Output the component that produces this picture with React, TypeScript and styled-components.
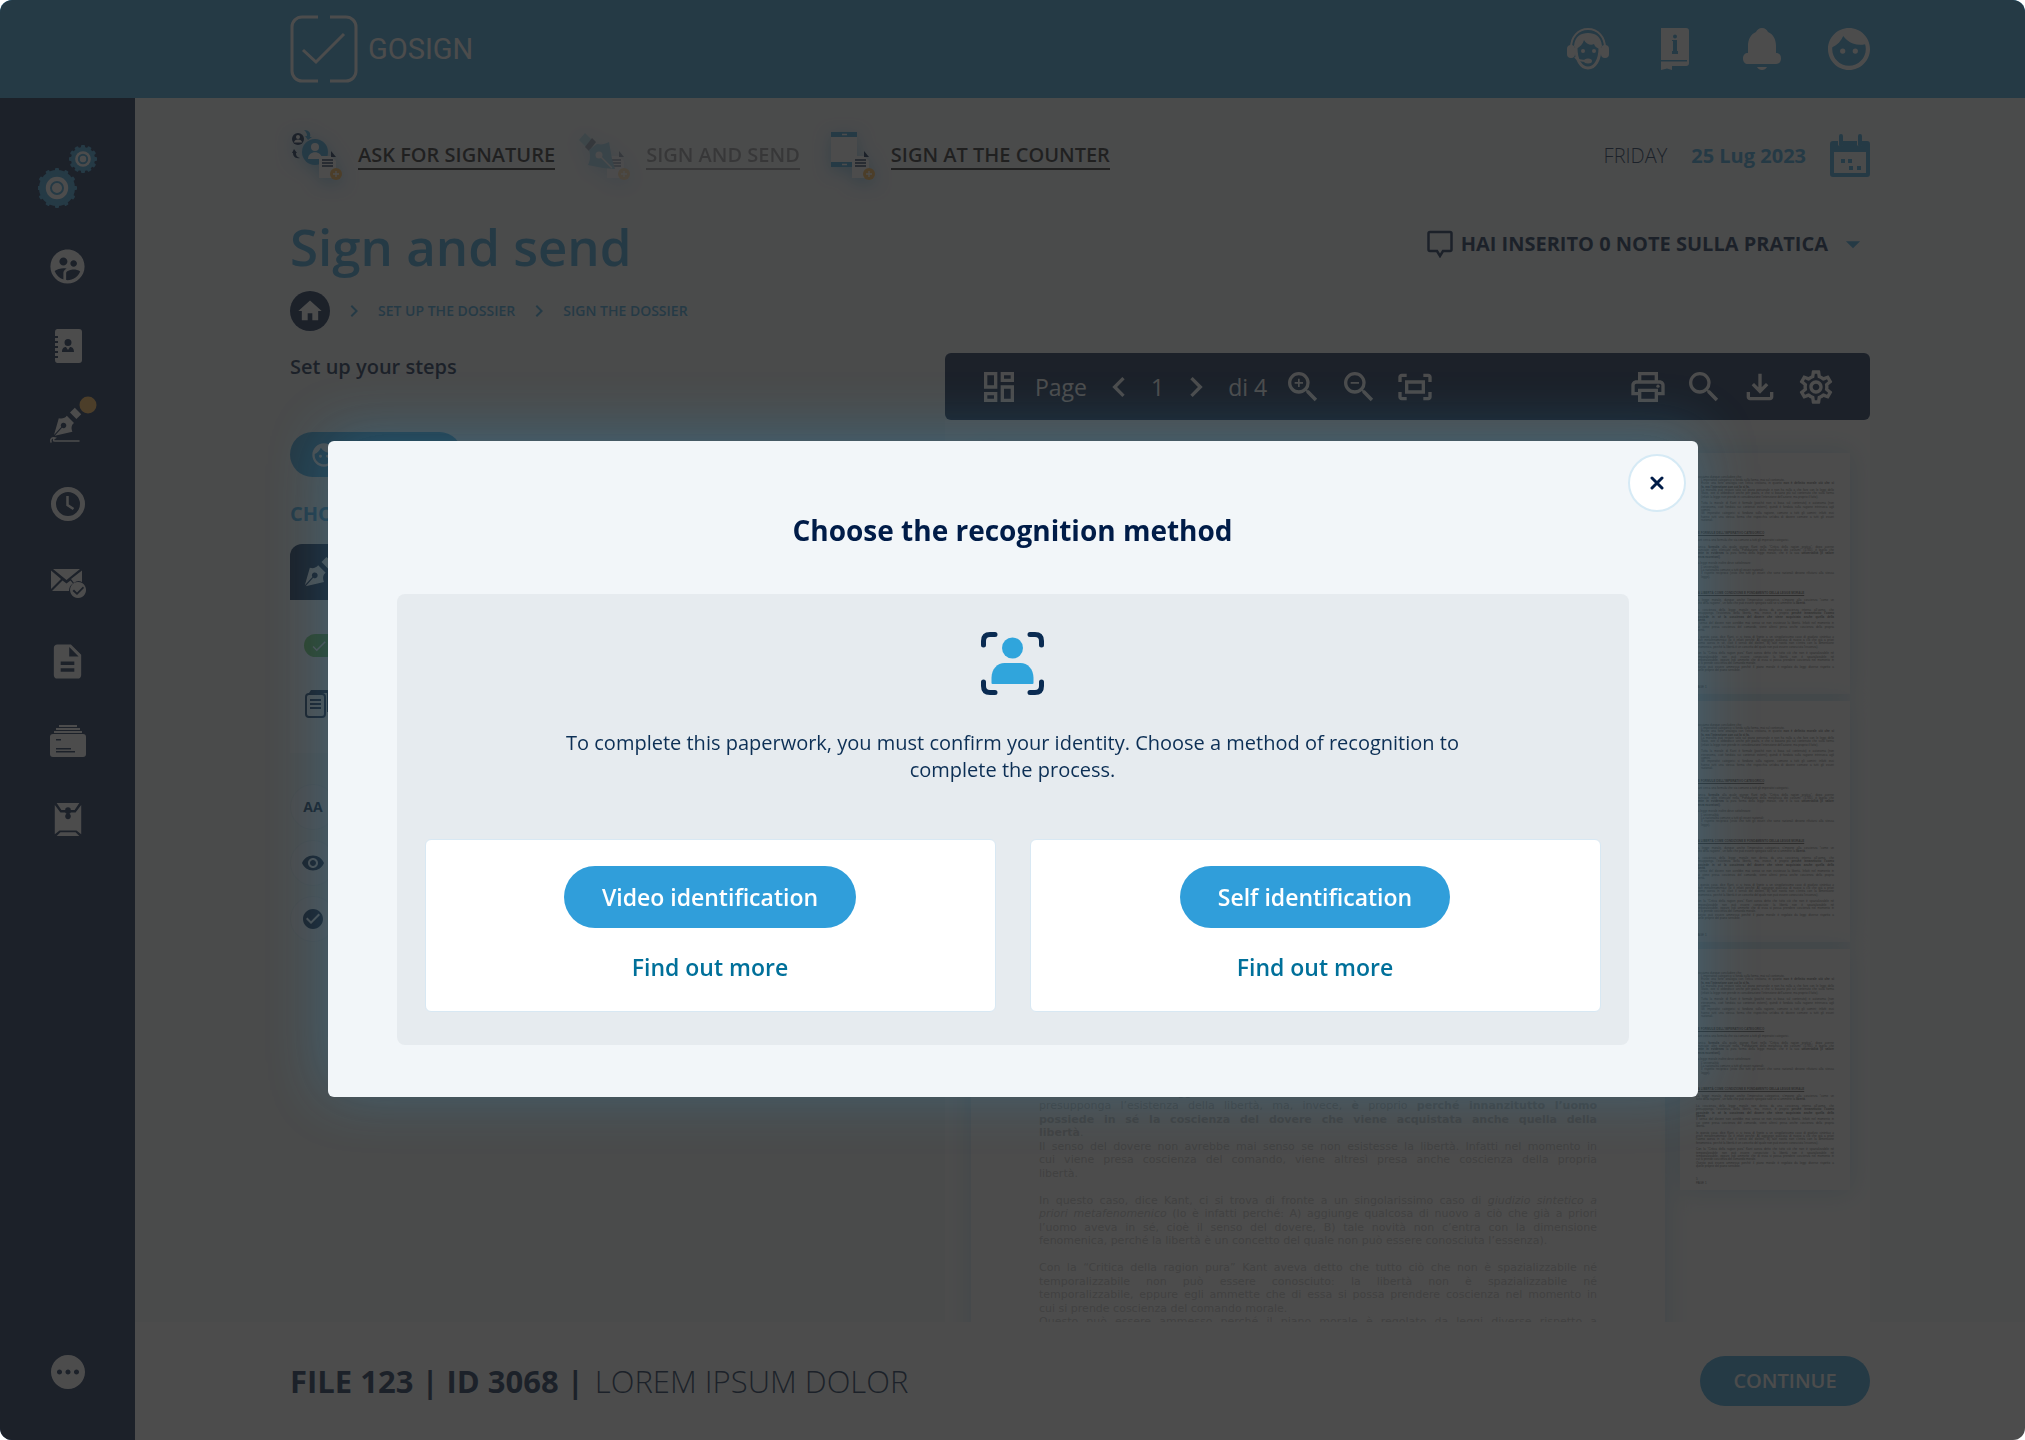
import React from "react";
import styled, { createGlobalStyle, css } from "styled-components";
import {
  MdArrowDropDown,
  MdCheck,
  MdCheckCircle,
  MdChevronLeft,
  MdChevronRight,
  MdDescription,
  MdFace,
  MdHome,
  MdOutlineDashboard,
  MdOutlineFileDownload,
  MdOutlineFitScreen,
  MdOutlinePrint,
  MdOutlineSettings,
  MdPending,
  MdRemoveRedEye,
  MdSearch,
  MdSupervisedUserCircle,
  MdZoomIn,
  MdZoomOut,
} from "react-icons/md";

const color = {
  brand: "#309eda",
  navy: "#001c48",
  ink: "#0c2f55",
  link: "#00709a",
  page: "#f2f6fa",
  panel: "#e6ebef",
  orange: "#ffb347",
  green: "#62c44a",
};

const GlobalStyle = createGlobalStyle`
  *, *::before, *::after { box-sizing: border-box; }
  body { margin: 0; background: #fff; }
  h1, h2, p { margin: 0; }
  button { border: 0; padding: 0; background: none; color: inherit; font: inherit; cursor: pointer; }
  a { color: inherit; text-decoration: none; }
  svg { display: block; flex: none; }
`;

const Shell = styled.div`
  display: grid;
  grid-template-columns: 135px minmax(0, 1fr);
  grid-template-rows: 98px minmax(0, 1fr) 118px;
  height: 100vh;
  border-radius: 12px;
  overflow: hidden;
  background: ${color.page};
  color: ${color.navy};
  font-family: "Open Sans", sans-serif;
  font-size: 20px;
  line-height: 28px;
`;

/* ---------- header ---------- */

const Header = styled.header`
  grid-column: 1 / -1;
  display: flex;
  align-items: center;
  justify-content: space-between;
  padding: 0 155px 0 290px;
  background: ${color.brand};
  color: #fff;
`;

const Brand = styled.a`
  display: flex;
  align-items: center;
  gap: 10px;
  font-family: Roboto, sans-serif;
  font-size: 29px;
`;

const HeaderActions = styled.div`
  display: flex;
  gap: 45px;
`;

/* ---------- sidebar ---------- */

const Sidebar = styled.nav`
  grid-row: 2 / -1;
  display: flex;
  flex-direction: column;
  align-items: center;
  padding: 46px 0 51px;
  background: ${color.navy};
  color: #fff;
`;

const SideList = styled.div`
  display: flex;
  flex-direction: column;
  margin: 17px 0 auto;
`;

const SideButton = styled.button`
  display: flex;
  align-items: center;
  justify-content: center;
  width: 60px;
  height: 79px;
  svg {
    overflow: visible;
  }
`;

/* ---------- main ---------- */

const Main = styled.main`
  display: flex;
  flex-direction: column;
  padding: 0 155px;
  overflow: hidden;
`;

const TopRow = styled.div`
  display: flex;
  align-items: center;
  justify-content: space-between;
  height: 116px;
`;

const Shortcuts = styled.div`
  display: flex;
  gap: 23px;
`;

const Shortcut = styled.a<{ $dim?: boolean }>`
  display: flex;
  align-items: center;
  gap: 14px;
  color: #1a1a1a;
  font-weight: 600;
  opacity: ${(p) => (p.$dim ? 0.45 : 1)};
  span {
    border-bottom: 2px solid currentColor;
    line-height: 26px;
  }
  svg {
    overflow: visible;
    filter: drop-shadow(0 4px 8px rgba(48, 158, 218, 0.5));
  }
`;

const Today = styled.div`
  display: flex;
  align-items: center;
  gap: 24px;
  font-weight: 300;
  strong {
    color: ${color.brand};
    font-weight: 700;
  }
`;

const TitleRow = styled.div`
  display: flex;
  align-items: center;
  justify-content: space-between;
`;

const Title = styled.h1`
  color: ${color.brand};
  font-size: 51px;
  font-weight: 600;
  line-height: 64px;
`;

const NotesButton = styled.button`
  display: flex;
  align-items: center;
  gap: 8px;
  padding-bottom: 4px;
  font-weight: 700;
`;

const Breadcrumb = styled.nav`
  display: flex;
  align-items: center;
  gap: 12px;
  height: 40px;
  margin: 13px 0 22px;
  color: ${color.brand};
  font-size: 14px;
  font-weight: 600;
`;

const HomeLink = styled.a`
  display: flex;
  align-items: center;
  justify-content: center;
  width: 40px;
  height: 40px;
  border-radius: 50%;
  background: ${color.navy};
  color: #fff;
`;

const Columns = styled.div`
  flex: 1;
  display: grid;
  grid-template-columns: minmax(0, 615fr) minmax(0, 925fr);
  gap: 40px;
  min-height: 0;
`;

const Steps = styled.section`
  display: flex;
  flex-direction: column;
  align-items: flex-start;
  h2 {
    font-size: 20px;
    font-weight: 600;
    line-height: 28px;
  }
`;

const SignerPill = styled.button`
  display: flex;
  align-items: center;
  width: 172px;
  height: 45px;
  margin: 51px 0 23px;
  padding: 0 20px;
  border-radius: 23px;
  background: ${color.brand};
  color: #fff;
`;

const ChooseLabel = styled.p`
  margin-bottom: 16px;
  color: ${color.brand};
  font-weight: 700;
`;

const SignTab = styled.div`
  display: flex;
  align-items: center;
  align-self: stretch;
  height: 56px;
  padding: 0 14px;
  border-radius: 12px 12px 0 0;
  background: ${color.navy};
  color: #fff;
`;

const SignPanel = styled.div`
  display: flex;
  flex-direction: column;
  align-self: stretch;
  align-items: flex-start;
  gap: 32px;
  height: 153px;
  margin-bottom: 31px;
  padding: 34px 14px;
  background: #fbfcfd;
`;

const StatusPill = styled.span`
  display: flex;
  align-items: center;
  width: 60px;
  height: 24px;
  padding: 0 6px;
  border-radius: 12px;
  background: ${color.green};
  color: #fff;
`;

const RoundButton = styled.button`
  display: flex;
  align-items: center;
  justify-content: center;
  width: 46px;
  height: 46px;
  margin-bottom: 10px;
  border: 1px solid #e4edf4;
  border-radius: 50%;
  background: #f8fafc;
  font-size: 14px;
  font-weight: 700;
`;

/* ---------- document viewer ---------- */

const Viewer = styled.section`
  display: flex;
  flex-direction: column;
  min-height: 0;
`;

const Toolbar = styled.div`
  display: flex;
  align-items: center;
  gap: 16px;
  height: 67px;
  padding: 0 34px;
  border-radius: 6px;
  background: ${color.navy};
  color: #fff;
  font-size: 23px;
`;

const Pager = styled.div`
  display: flex;
  align-items: center;
  gap: 12px;
`;

const ToolSpacer = styled.span`
  flex: 1;
`;

const Pages = styled.div`
  flex: 1;
  display: flex;
  align-items: flex-start;
  gap: 15px;
  min-height: 0;
  padding: 33px 20px 0 26px;
  overflow: hidden;
  background: #fdfdfc;
`;

const paper = css`
  background: #fff;
  box-shadow: 0 0 24px rgba(48, 158, 218, 0.3);
`;

const Sheet = styled.article`
  ${paper}
  flex: 1;
  min-width: 0;
  padding: 93px 68px;
  color: #c2c2c2;
  font-family: "DejaVu Sans", sans-serif;
  font-size: 11px;
  line-height: 13px;
  --indent: 22px;
  p:nth-child(2n) {
    margin-bottom: 1px;
  }
`;

const Thumbs = styled.div`
  display: flex;
  flex-direction: column;
  gap: 7px;
  width: 170px;
`;

const Thumb = styled.div`
  ${paper}
  height: 241px;
  padding: 23px 16px 0;
  color: #5c5c5c;
  font-family: "Liberation Sans", sans-serif;
  font-size: 3px;
  line-height: 3px;
  --indent: 5px;
  p:nth-child(3n) {
    margin-bottom: 1px;
  }
`;

const Line = styled.p<{ $kind: string }>`
  height: 1lh;
  white-space: nowrap;
  text-align-last: ${(p) => (p.$kind.includes("j") ? "justify" : "left")};
  padding-left: ${(p) => (p.$kind.includes("i") ? "var(--indent)" : "0")};
  font-weight: ${(p) => (p.$kind.includes("h") ? 700 : 400)};
  text-decoration: ${(p) => (p.$kind.includes("h") ? "underline" : "none")};
`;

/* ---------- footer ---------- */

const Footer = styled.footer`
  display: flex;
  align-items: center;
  justify-content: space-between;
  padding: 0 155px;
  background: #fff;
`;

const FileName = styled.p`
  display: flex;
  gap: 11px;
  font-size: 31px;
  font-weight: 300;
  line-height: 40px;
  strong {
    font-weight: 700;
  }
`;

const ContinueButton = styled.button`
  width: 170px;
  height: 50px;
  border-radius: 25px;
  background: ${color.brand};
  color: #fff;
  font-weight: 600;
`;

/* ---------- dialog ---------- */

const Scrim = styled.div`
  position: fixed;
  inset: 0;
  display: flex;
  align-items: center;
  justify-content: center;
  padding: 98px 40px 0;
  border-radius: 12px;
  background: rgba(35, 35, 35, 0.81);
  font-family: "Open Sans", sans-serif;
`;

const Dialog = styled.section`
  position: relative;
  width: 1370px;
  max-width: 100%;
  padding: 69px 69px 52px;
  border-radius: 6px;
  background: #f2f6f9;
  box-shadow: 0 -6px 60px rgba(48, 158, 218, 0.3);
  text-align: center;
`;

const CloseButton = styled.button`
  position: absolute;
  top: 13px;
  right: 12px;
  display: flex;
  align-items: center;
  justify-content: center;
  width: 58px;
  height: 58px;
  border: 2px solid #d6eaf5;
  border-radius: 50%;
  background: #fff;
`;

const DialogTitle = styled.h2`
  color: ${color.navy};
  font-size: 28px;
  font-weight: 700;
  line-height: 40px;
`;

const DialogBody = styled.div`
  display: flex;
  flex-direction: column;
  align-items: center;
  margin-top: 44px;
  padding: 38px 28px 33px;
  border-radius: 8px;
  background: ${color.panel};
`;

const Explanation = styled.p`
  max-width: 920px;
  margin: 34px 0 56px;
  color: ${color.ink};
  font-size: 20px;
  line-height: 27px;
`;

const Methods = styled.div`
  display: grid;
  grid-template-columns: 1fr 1fr;
  gap: 34px;
  width: 100%;
`;

const MethodCard = styled.div`
  display: flex;
  flex-direction: column;
  align-items: center;
  gap: 23px;
  padding: 26px 20px 28px;
  border: 1px solid #d8e8f3;
  border-radius: 6px;
  background: #fff;
  font-size: 23px;
  font-weight: 600;
  line-height: 32px;
`;

const MethodButton = styled.button`
  height: 62px;
  padding: 0 38px;
  border-radius: 31px;
  background: ${color.brand};
  color: #fff;
`;

const MoreLink = styled.a`
  color: ${color.link};
`;

/* ---------- drawings ---------- */

const LogoMark = () => (
  <svg width="68" height="68" viewBox="0 0 68 68" fill="none" stroke="#fff" strokeWidth="3">
    <path d="M28 2H12A10 10 0 0 0 2 12v44a10 10 0 0 0 10 10h16M40 2h16a10 10 0 0 1 10 10v44a10 10 0 0 1-10 10H40" />
    <path d="M13 35l13 12L54 19" />
  </svg>
);

const SupportIcon = () => (
  <svg width="42" height="42" viewBox="0 0 42 42" fill="none">
    <path d="M4 20C4 9 11 1 21 1S38 9 38 20" stroke="currentColor" strokeWidth="2" />
    <path d="M7 18C8 8 14 5 21 5s13 3 14 13l-2 3c-3-1-5-2-6-5-3 2-8 0-10-4-1 4-4 7-8 9z" fill="currentColor" />
    <path d="M9 20c0 12 5 20 12 20s12-8 12-20" stroke="currentColor" strokeWidth="3" />
    <rect x="0" y="17" width="8" height="13" rx="4" fill="currentColor" />
    <rect x="34" y="17" width="8" height="13" rx="4" fill="currentColor" />
    <circle cx="16" cy="23" r="2" fill="currentColor" />
    <circle cx="27" cy="23" r="2" fill="currentColor" />
    <path d="M8 29c2 3 7 4 12 4" stroke="currentColor" strokeWidth="2" />
    <ellipse cx="21" cy="33" rx="4" ry="2.500" fill="currentColor" />
  </svg>
);

const GuideIcon = () => (
  <svg width="42" height="42" viewBox="0 0 42 42" fill="currentColor">
    <path
      fillRule="evenodd"
      d="M7 0h25a3 3 0 0 1 3 3v29H7zM19 13v10h-1v3h6v-3h-1V12h-5v1zM21 6.500a2 2 0 1 0 0 4 2 2 0 0 0 0-4z"
    />
    <path d="M7 33.500h26V32h2v3a3 3 0 0 1-3 3H18v4l-5-1.500L7 42z" />
  </svg>
);

const BellIcon = () => (
  <svg width="42" height="42" viewBox="0 0 42 42" fill="currentColor">
    <path d="M21 0c3 0 5 2 6 4 5 2 8 7 8 14v7c3 0 5 2 5 5.500S38 36 35 36H7c-3 0-5-2-5-5.500S4 25 7 25v-7C7 11 10 6 15 4c1-2 3-4 6-4z" />
    <path d="M16 39h10c-1 2-3 3-5 3s-4-1-5-3z" />
  </svg>
);

const gearTeeth = Array.from({ length: 12 }, (_, i) => i * 30);

const Gear = ({ x, y, r }: { x: number; y: number; r: number }) => (
  <g transform={`translate(${x} ${y})`}>
    <circle r={r - 2} fill={color.brand} />
    {gearTeeth.map((a) => (
      <rect key={a} x={-2} y={-r} width={4} height={5} rx={1} fill={color.brand} transform={`rotate(${a})`} />
    ))}
    <circle r={r * 0.56} fill="#fff" />
    <circle r={r * 0.3} fill="none" stroke={color.brand} strokeWidth="2" />
  </g>
);

const GearsIcon = () => (
  <svg width="60" height="66" viewBox="0 0 60 66">
    <Gear x={19} y={44} r={20} />
    <Gear x={45} y={15} r={14} />
  </svg>
);

const AddressBookIcon = () => (
  <svg width="30" height="34" viewBox="0 0 30 34" fill="currentColor">
    <path
      fillRule="evenodd"
      d="M4 0h22a3 3 0 0 1 3 3v28a3 3 0 0 1-3 3H4a3 3 0 0 1-2-3v-2h3v-2H2v-3h3v-2H2v-3h3v-2H2v-3h3v-2H2V9h3V7H2V3a3 3 0 0 1 2-3zM15 10a3.200 3.200 0 1 0 0 7 3.200 3.200 0 0 0 0-7zM9 23h12c0-4-2-5-4-5l-2 3-2-3c-2 0-4 1-4 5z"
    />
  </svg>
);

const Nib = () => (
  <>
    <path fillRule="evenodd" d="M6 9c4 1 8 0 10-3l9 9c-3 2-4 6-2 11L1 31l9-10a3.500 3.500 0 1 0-1-1L0 30z" />
    <path d="M20 2l6-6 8 8-6 6z" />
  </>
);

const PenIcon = () => (
  <svg width="46" height="46" viewBox="0 0 46 46" fill="currentColor">
    <g transform="translate(9 9) scale(.8)">
      <Nib />
    </g>
    <path
      d="M6 40c-1-3 1-5 4-4-2 1-2 3 0 3h24"
      fill="none"
      stroke="currentColor"
      strokeWidth="1.500"
      strokeLinecap="round"
    />
    <circle cx="43" cy="3" r="8.500" fill={color.orange} />
  </svg>
);

const ClockIcon = () => (
  <svg width="34" height="34" viewBox="0 0 34 34" fill="none" stroke="currentColor">
    <circle cx="17" cy="17" r="14.500" strokeWidth="5" />
    <path d="M16.500 9v9l6 4" strokeWidth="2.500" />
  </svg>
);

const MailCheckIcon = () => (
  <svg width="36" height="32" viewBox="0 0 36 32" fill="currentColor">
    <path d="M3 2h27L16.500 13zM1 3.500L11 12 1 22zM32 3.500V15c-3-2-6-1-8 1l-3-4zM2 24L12.500 13.500l4 3 4-3 2.500 3c-3 2-4 4-4 7.500z" />
    <path fillRule="evenodd" d="M28 15a8 8 0 1 0 .1 0zM24 22.500l3 3 6-6 1 1.500-7 7-4.500-4z" />
  </svg>
);

const CardsIcon = () => (
  <svg width="36" height="32" viewBox="0 0 36 32" fill="currentColor">
    <path d="M9 0h18v2H9zM6 3h24v2H6zM4 6h28v2H4z" />
    <path
      fillRule="evenodd"
      d="M3 9h30a3 3 0 0 1 3 3v17a3 3 0 0 1-3 3H3a3 3 0 0 1-3-3V12a3 3 0 0 1 3-3zm3 5v1.500h5V14zm0 9v1.500h15V23zm0 3v1.500h19V26z"
    />
  </svg>
);

const ArchiveIcon = () => (
  <svg width="30" height="34" viewBox="0 0 30 36" fill="currentColor">
    <path d="M3 0h24l-5 7.500h-4a3 3 0 1 0-6 0H8z" />
    <path d="M1 2l6 8h5a3 3 0 0 0 1.500 1.500 3 3 0 1 0 3 0A3 3 0 0 0 18 10h5l6-8v31l-5-4H6l-5 4z" />
    <path d="M7 31h16l4 4H3z" />
  </svg>
);

const FileBadge = () => (
  <>
    <path d="M29 27h12l5 5v17H29z" fill="#fff" />
    <path d="M41 22l5 6h-5z" fill={color.navy} />
    <path d="M32 31h11M32 34h11M32 37h11" stroke={color.navy} strokeWidth="1.300" />
    <circle cx="46" cy="45" r="6" fill={color.orange} />
    <path d="M46 42v6M43 45h6" stroke="#fff" strokeWidth="1.300" />
  </>
);

const AskIcon = () => (
  <svg width="54" height="54" viewBox="0 0 54 54">
    <circle cx="8" cy="10" r="6" fill={color.navy} />
    <circle cx="8" cy="8" r="2" fill="#fff" />
    <path d="M4 13.500c0-4 8-4 8 0z" fill="#fff" />
    <path d="M14 1c5 0 7 3 6 7h2l-4 3-3-4h2c0-3-1-4-3-6z" fill={color.brand} />
    <path d="M4 20l3 4H6c0 3 1 4 4 5-5 1-7-2-7-5H2z" fill={color.navy} />
    <circle cx="25" cy="23" r="13" fill={color.brand} />
    <circle cx="25" cy="18" r="4" fill="#fff" />
    <path d="M18 30c0-9 14-9 14 0z" fill="#fff" />
    <FileBadge />
  </svg>
);

const SendIcon = () => (
  <svg width="54" height="54" viewBox="0 0 54 54">
    <FileBadge />
    <path d="M1 11l6-7 7 7-6 7z" fill="#5fc0e0" />
    <path d="M7 18l7-9 4 4-7 9z" fill={color.navy} />
    <path d="M11 21l8-6c5 1 8 0 12-2l3 17 3 10-12-1-15-3c2-4 3-9 1-15z" fill="#30a5dc" />
    <path d="M21 26l13 13" stroke="#fff" strokeWidth="1.500" />
    <circle cx="21" cy="26" r="3.500" fill="#fff" />
  </svg>
);

const CounterIcon = () => (
  <svg width="54" height="54" viewBox="0 0 54 54">
    <rect x="8" y="3" width="26" height="35" rx="1" fill="#fff" />
    <path d="M8 3h26v5H8zM8 33h26v5H8z" fill={color.brand} />
    <path d="M19 5.500h5M19 35.500h5" stroke="#fff" strokeWidth="1.500" />
    <FileBadge />
  </svg>
);

const CalendarIcon = () => (
  <svg width="40" height="44" viewBox="0 0 40 44" fill={color.brand}>
    <path
      fillRule="evenodd"
      d="M3 7h5v4a3 3 0 0 0 5 0V7h14v4a3 3 0 0 0 5 0V7h5a3 3 0 0 1 3 3v30a3 3 0 0 1-3 3H3a3 3 0 0 1-3-3V10a3 3 0 0 1 3-3zm1 11v21h32V18z"
    />
    <path d="M9 2a2 2 0 0 1 4 0v9a2 2 0 0 1-4 0zM28 2a2 2 0 0 1 4 0v9a2 2 0 0 1-4 0z" />
    <path d="M11 25h4v4h-4zM18 25h4v4h-4zM19 32h4v4h-4zM27 32h4v4h-4z" />
  </svg>
);

const NoteIcon = () => (
  <svg width="26" height="28" viewBox="0 0 26 28" fill="none" stroke="currentColor" strokeWidth="2.500">
    <path d="M3 2h20q1.500 0 1.500 1.500v16q0 1.500-1.500 1.500h-7l-3 5-3-5H3q-1.500 0-1.500-1.500v-16Q1.500 2 3 2z" />
  </svg>
);

const CopyIcon = () => (
  <svg width="28" height="30" viewBox="0 0 28 30" fill="none">
    <path d="M7 1h20v22h-4V4H5z" fill={color.navy} />
    <rect x="2" y="5" width="19" height="23" rx="3" fill="#fff" stroke={color.navy} strokeWidth="2" />
    <path d="M6 11h11M6 15h11M6 19h11" stroke={color.navy} strokeWidth="2" />
  </svg>
);

const RecognitionIcon = () => (
  <svg width="63" height="63" viewBox="0 0 63 63">
    <path
      d="M2.500 13V9Q2.500 2.500 9 2.500h5M49 2.500h5q6.500 0 6.500 6.500v4M2.500 50v4q0 6.500 6.500 6.500h5M49 60.500h5q6.500 0 6.500-6.500v-4"
      fill="none"
      stroke="#0a2b52"
      strokeWidth="5"
      strokeLinecap="round"
    />
    <circle cx="31.500" cy="16" r="10.500" fill="#30a5dc" />
    <path d="M10.500 51V46c0-9 6-15 13-15h16c7 0 13 6 13 15v5q0 1-1 1h-40q-1 0-1-1z" fill="#30a5dc" />
  </svg>
);

const CloseIcon = () => (
  <svg width="14" height="14" viewBox="0 0 14 14" stroke={color.navy} strokeWidth="3" strokeLinecap="round">
    <path d="M2 2l10 10M12 2L2 12" />
  </svg>
);

/* Lines of the contract. Kind: j = justified, i = indented, h = heading. ** is bold, _ is italic. */
const documentLines: [string, string][] = [
  ["", "Possiamo dunque concludere che:"],
  ["i", "L’imperativo categorico si fonda sulla forma, mai sul contenuto."],
  ["ij", "Esiste una forte analogia con l’etica cristiana, in quanto **non è definito morale ciò che si**"],
  ["i", "**fa, ma l’intenzione con cui lo si fa.**"],
  ["ij", "La moralità può restare solo sul piano personale e non ha nulla a che fare con le leggi dello"],
  ["ij", "Stato, ove si obbedisce anche per paura, e che si basano più sul contenuto che sulla forma"],
  ["i", "(infatti la legge non prende in considerazione l’intenzione dell’azione, ma proprio il fatto)."],
  ["", ""],
  ["ij", "Tutta la morale di Kant è formale (poiché non si basa sul contenuto) e autonoma (non"],
  ["ij", "eteronoma, cioè fondata sui contenuti esterni), quindi è fondata sulla ragione intrinseca agli"],
  ["i", "uomini."],
  ["ij", "Gli imperativi categorici si fondano sulla ragione, comune a tutti gli uomini; infatti essi"],
  ["ij", "hanno tutti una stessa forma che rispecchia un’idea di dovere comune a tutti gli esseri"],
  ["i", "razionali."],
  ["", ""],
  ["", ""],
  ["", ""],
  ["h", "LE FORMULE DELL’IMPERATIVO CATEGORICO"],
  ["", ""],
  ["", "Kant cerca una formula che sia comune a tutti gli imperativi categorici."],
  ["", ""],
  ["j", "L’unica **formula** alla quale giunge Kant nella “Critica della ragion pratica”, dopo averne"],
  ["j", "enunciate altre elencate nella “Fondazione della metafisica dei costumi” (1785), è quella che"],
  ["j", "**mette in evidenza** la pura forma della legge morale, che è la sua **universalità (il valore**"],
  ["", "**senza eccezioni)**."],
  ["", ""],
  ["", "La legge morale inoltre deve sottolineare:"],
  ["i", "L’universalità;"],
  ["i", "La razionalità comune a tutti gli esseri razionali;"],
  ["ij", "Il rispetto reciproco (visto che tutti gli esseri che sono razionali devono rifiutarsi alla stessa"],
  ["i", "legge)."],
  ["", ""],
  ["", ""],
  ["", ""],
  ["", ""],
  ["h", "LA LIBERTÀ COME CONDIZIONE E FONDAMENTO DELLA LEGGE MORALE"],
  ["", ""],
  ["j", "La legge morale, dunque anche l’imperativo categorico, s’impone alla coscienza “come un"],
  ["", "fatto della ragione”, un fatto che può essere spiegato solo se si ammette la **libertà**."],
  ["", ""],
  ["j", "La coscienza della legge morale non deriva da una coscienza interna all’uomo, che"],
  ["j", "presupponga l’esistenza della libertà, ma, invece, **è** proprio **perché innanzitutto l’uomo**"],
  ["j", "**possiede in sé la coscienza del dovere che viene acquistata anche quella della**"],
  ["", "**libertà**."],
  ["j", "Il senso del dovere non avrebbe mai senso se non esistesse la libertà. Infatti nel momento in"],
  ["j", "cui viene presa coscienza del comando, viene altresì presa anche coscienza della propria"],
  ["", "libertà."],
  ["", ""],
  ["j", "In questo caso, dice Kant, ci si trova di fronte a un singolarissimo caso di _giudizio sintetico a_"],
  ["j", "_priori metafenomenico_ (lo è infatti perché: A) aggiunge qualcosa di nuovo a ciò che già a priori"],
  ["j", "l’uomo aveva in sé, cioè il senso del dovere,  B) tale novità non c’entra con la dimensione"],
  ["", "fenomenica, perché la libertà è un concetto del quale non può essere conosciuta l’essenza)."],
  ["", ""],
  ["j", "Con la “Critica della ragion pura” Kant aveva detto che tutto ciò che non è spazializzabile né"],
  ["j", "temporalizzabile non può essere conosciuto: la libertà non è spazializzabile né"],
  ["j", "temporalizzabile, eppure egli ammette che di essa si possa prendere coscienza nel momento in"],
  ["", "cui si prende coscienza del comando morale."],
  ["j", "Questo può essere ammesso perché il piano morale è regolato da leggi diverse rispetto a"],
  ["", "quelle proprie del piano sensibile."],
  ["", ""],
  ["", ""],
  ["", ""],
  ["", "5"],
  ["", "PAGE 1"],
];

const DocumentText = () => (
  <>
    {documentLines.map(([kind, text], i) => (
      <Line key={i} $kind={kind}>
        {text.split(/(\*\*.+?\*\*|_.+?_)/).map((part, j) => {
          if (part.startsWith("**")) return <b key={j}>{part.slice(2, -2)}</b>;
          if (part.startsWith("_")) return <i key={j}>{part.slice(1, -1)}</i>;
          return part;
        })}
      </Line>
    ))}
  </>
);

const sideItems = [
  { name: "Users", icon: <MdSupervisedUserCircle size={41} /> },
  { name: "Contacts", icon: <AddressBookIcon /> },
  { name: "Sign", icon: <PenIcon /> },
  { name: "History", icon: <ClockIcon /> },
  { name: "Messages", icon: <MailCheckIcon /> },
  { name: "Documents", icon: <MdDescription size={41} /> },
  { name: "Cards", icon: <CardsIcon /> },
  { name: "Archive", icon: <ArchiveIcon /> },
];

export default function App() {
  return (
    <>
      <GlobalStyle />
      <Shell>
        <Header>
          <Brand href="#">
            <LogoMark />
            GOSIGN
          </Brand>
          <HeaderActions>
            <button aria-label="Support"><SupportIcon /></button>
            <button aria-label="Guide"><GuideIcon /></button>
            <button aria-label="Notifications"><BellIcon /></button>
            <button aria-label="Profile"><MdFace size={42} viewBox="2 2 20 20" /></button>
          </HeaderActions>
        </Header>

        <Sidebar>
          <GearsIcon />
          <SideList>
            {sideItems.map((item) => (
              <SideButton key={item.name} aria-label={item.name}>{item.icon}</SideButton>
            ))}
          </SideList>
          <button aria-label="More"><MdPending size={34} viewBox="2 2 20 20" /></button>
        </Sidebar>

        <Main>
          <TopRow>
            <Shortcuts>
              <Shortcut href="#"><AskIcon /><span>ASK FOR SIGNATURE</span></Shortcut>
              <Shortcut href="#" $dim><SendIcon /><span>SIGN AND SEND</span></Shortcut>
              <Shortcut href="#"><CounterIcon /><span>SIGN AT THE COUNTER</span></Shortcut>
            </Shortcuts>
            <Today>
              FRIDAY
              <strong>25 Lug 2023</strong>
              <CalendarIcon />
            </Today>
          </TopRow>

          <TitleRow>
            <Title>Sign and send</Title>
            <NotesButton>
              <NoteIcon />
              HAI INSERITO 0 NOTE SULLA PRATICA
              <MdArrowDropDown size={34} color={color.brand} />
            </NotesButton>
          </TitleRow>

          <Breadcrumb aria-label="Breadcrumb">
            <HomeLink href="#" aria-label="Home"><MdHome size={28} /></HomeLink>
            <MdChevronRight size={24} />
            <a href="#">SET UP THE DOSSIER</a>
            <MdChevronRight size={24} />
            <a href="#">SIGN THE DOSSIER</a>
          </Breadcrumb>

          <Columns>
            <Steps>
              <h2>Set up your steps</h2>
              <SignerPill aria-label="Signer"><MdFace size={28} /></SignerPill>
              <ChooseLabel>CHOOSE</ChooseLabel>
              <SignTab>
                <svg width="30" height="30" viewBox="-1 -4 36 36" fill="currentColor"><Nib /></svg>
              </SignTab>
              <SignPanel>
                <StatusPill><MdCheck size={18} /></StatusPill>
                <CopyIcon />
              </SignPanel>
              <RoundButton>AA</RoundButton>
              <RoundButton aria-label="Preview"><MdRemoveRedEye size={24} /></RoundButton>
              <RoundButton aria-label="Confirm"><MdCheckCircle size={24} /></RoundButton>
            </Steps>

            <Viewer>
              <Toolbar>
                <button aria-label="Thumbnails"><MdOutlineDashboard size={40} /></button>
                <Pager>
                  <span>Page</span>
                  <button aria-label="Previous page"><MdChevronLeft size={40} /></button>
                  <span>1</span>
                  <button aria-label="Next page"><MdChevronRight size={40} /></button>
                  <span>di 4</span>
                </Pager>
                <button aria-label="Zoom in"><MdZoomIn size={40} /></button>
                <button aria-label="Zoom out"><MdZoomOut size={40} /></button>
                <button aria-label="Fit page"><MdOutlineFitScreen size={40} /></button>
                <ToolSpacer />
                <button aria-label="Print"><MdOutlinePrint size={40} /></button>
                <button aria-label="Search"><MdSearch size={40} /></button>
                <button aria-label="Download"><MdOutlineFileDownload size={40} /></button>
                <button aria-label="Settings"><MdOutlineSettings size={40} /></button>
              </Toolbar>
              <Pages>
                <Sheet><DocumentText /></Sheet>
                <Thumbs>
                  {[1, 2, 3].map((page) => (
                    <Thumb key={page}><DocumentText /></Thumb>
                  ))}
                </Thumbs>
              </Pages>
            </Viewer>
          </Columns>
        </Main>

        <Footer>
          <FileName><strong>FILE 123 | ID 3068 |</strong> LOREM IPSUM DOLOR</FileName>
          <ContinueButton>CONTINUE</ContinueButton>
        </Footer>
      </Shell>

      <Scrim>
        <Dialog role="dialog" aria-modal="true" aria-labelledby="recognition-title">
          <CloseButton aria-label="Close"><CloseIcon /></CloseButton>
          <DialogTitle id="recognition-title">Choose the recognition method</DialogTitle>
          <DialogBody>
            <RecognitionIcon />
            <Explanation>
              To complete this paperwork, you must confirm your identity. Choose a method of recognition to
              complete the process.
            </Explanation>
            <Methods>
              <MethodCard>
                <MethodButton>Video identification</MethodButton>
                <MoreLink href="#">Find out more</MoreLink>
              </MethodCard>
              <MethodCard>
                <MethodButton>Self identification</MethodButton>
                <MoreLink href="#">Find out more</MoreLink>
              </MethodCard>
            </Methods>
          </DialogBody>
        </Dialog>
      </Scrim>
    </>
  );
}
